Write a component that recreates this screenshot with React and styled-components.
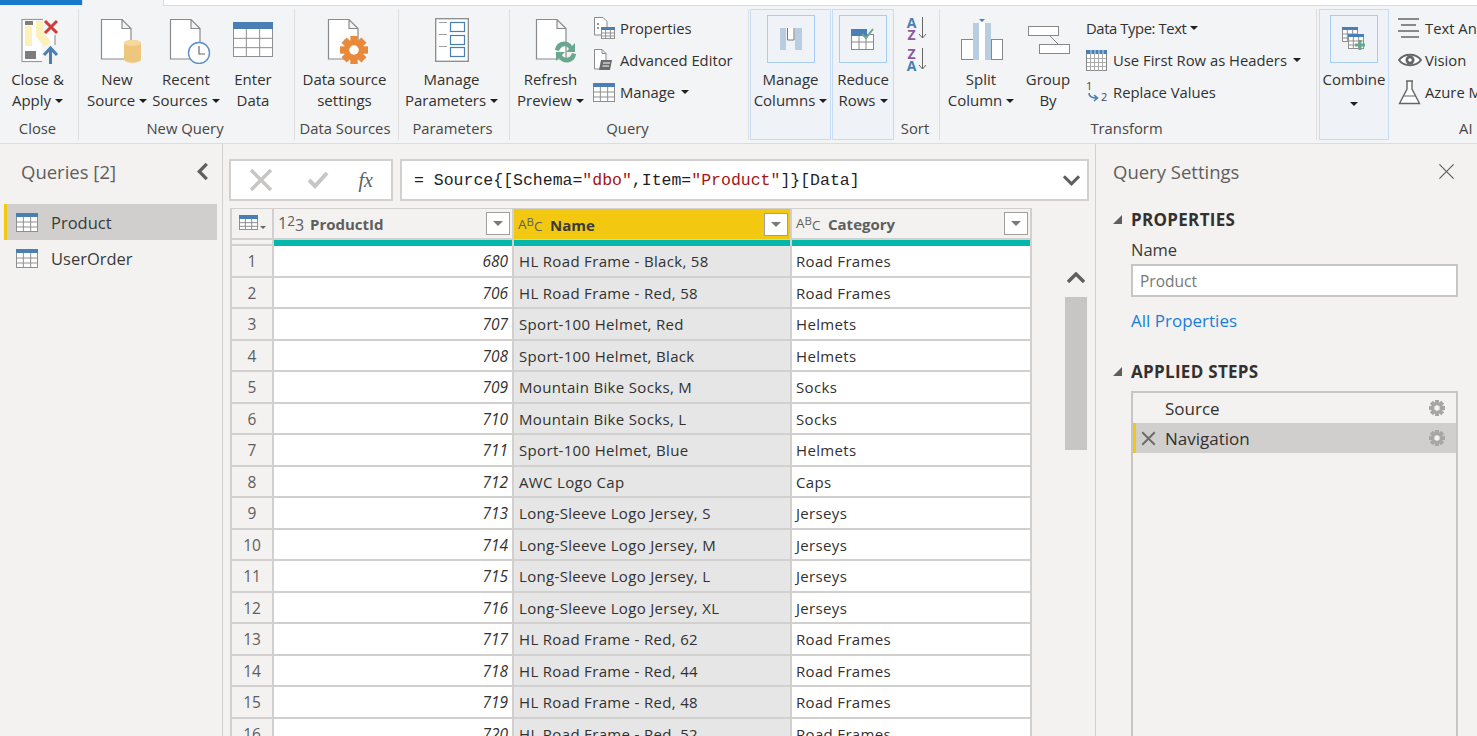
import styled, { createGlobalStyle } from "styled-components";

const GlobalStyle = createGlobalStyle`
  html, body {
    margin: 0;
    padding: 0;
    height: 100%;
    overflow: hidden;
    background: #f3f2f1;
  }
  * { box-sizing: border-box; }
`;

const FONT = `"Open Sans", "Noto Sans", sans-serif`;
const LINE = "#d2d0ce";

const ROWS = [
  [680, "HL Road Frame - Black, 58", "Road Frames"],
  [706, "HL Road Frame - Red, 58", "Road Frames"],
  [707, "Sport-100 Helmet, Red", "Helmets"],
  [708, "Sport-100 Helmet, Black", "Helmets"],
  [709, "Mountain Bike Socks, M", "Socks"],
  [710, "Mountain Bike Socks, L", "Socks"],
  [711, "Sport-100 Helmet, Blue", "Helmets"],
  [712, "AWC Logo Cap", "Caps"],
  [713, "Long-Sleeve Logo Jersey, S", "Jerseys"],
  [714, "Long-Sleeve Logo Jersey, M", "Jerseys"],
  [715, "Long-Sleeve Logo Jersey, L", "Jerseys"],
  [716, "Long-Sleeve Logo Jersey, XL", "Jerseys"],
  [717, "HL Road Frame - Red, 62", "Road Frames"],
  [718, "HL Road Frame - Red, 44", "Road Frames"],
  [719, "HL Road Frame - Red, 48", "Road Frames"],
  [720, "HL Road Frame - Red, 52", "Road Frames"],
];

const Doc = ({ x = 1, w = 30, h = 41 }) => (
  <path
    d={`M${x + 0.5} 1.5H${x + w - 9}L${x + w} 10.5V${h}H${x + 0.5}Z M${x + w - 9} 1.5V10.5H${x + w}`}
    fill="#fff"
    stroke="#8a8a8a"
    strokeWidth="1.2"
  />
);

const GridTable = ({ x = 0, y = 0, w = 40, h = 35, cols = 3, rows = 3, head = 7, stroke = "#8f8f8f" }) => {
  const cells = [];
  const bodyH = h - head;
  for (let i = 1; i < cols; i++) {
    const cx = x + (w * i) / cols;
    cells.push(<path key={`c${i}`} d={`M${cx} ${y + head}V${y + h}`} stroke={stroke} strokeWidth="1" />);
  }
  for (let i = 1; i < rows; i++) {
    const cy = y + head + (bodyH * i) / rows;
    cells.push(<path key={`r${i}`} d={`M${x} ${cy}H${x + w}`} stroke={stroke} strokeWidth="1" />);
  }
  return (
    <g>
      <rect x={x + 0.5} y={y + 0.5} width={w - 1} height={h - 1} fill="#fff" stroke={stroke} />
      {cells}
      <rect x={x} y={y} width={w} height={head} fill="#4a7fb5" />
    </g>
  );
};

const Gear = ({ cx, cy, r, fill, hole }) => (
  <g fill={fill}>
    {[0, 45, 90, 135].map((a) => (
      <rect
        key={a}
        x={cx - r * 0.26}
        y={cy - r}
        width={r * 0.52}
        height={r * 2}
        transform={`rotate(${a} ${cx} ${cy})`}
      />
    ))}
    <circle cx={cx} cy={cy} r={r * 0.72} />
    <circle cx={cx} cy={cy} r={r * 0.34} fill={hole} />
  </g>
);

const CloseApplyIcon = () => (
  <svg width="38" height="46" viewBox="0 0 38 46">
    <rect x="1" y="1.5" width="33" height="42" fill="#fff" stroke="#9a9a9a" strokeWidth="1.2" />
    <path d="M4 8H11V28H4Z M15 3H22V14L30 24L24 30L15 18Z" fill="#fdf0b8" />
    <rect x="4" y="3" width="8" height="4" fill="#7d7d7d" />
    <rect x="4" y="33" width="11" height="8" fill="#7d7d7d" />
    <rect x="22" y="0" width="16" height="17" fill="#f3f4f6" />
    <path d="M24 3L36 15M36 3L24 15" stroke="#cf3a3a" strokeWidth="3" />
    <rect x="21" y="27" width="17" height="19" fill="#f3f4f6" />
    <path d="M29.5 46V31M23 37L29.5 30L36 37" fill="none" stroke="#4a7fb5" strokeWidth="3" />
  </svg>
);

const NewSourceIcon = () => (
  <svg width="42" height="46" viewBox="0 0 42 46">
    <Doc />
    <path d="M24 25C24 21 41 21 41 25V41C41 46 24 46 24 41Z" fill="#eec67e" />
    <ellipse cx="32.5" cy="25" rx="8.5" ry="3" fill="#f4d99f" />
  </svg>
);

const RecentIcon = () => (
  <svg width="42" height="46" viewBox="0 0 42 46">
    <Doc />
    <circle cx="30" cy="35" r="10.5" fill="#fff" stroke="#5b8fc5" strokeWidth="1.4" />
    <path d="M30 28V36H36" fill="none" stroke="#6a6a6a" strokeWidth="1.2" />
  </svg>
);

const EnterDataIcon = () => (
  <svg width="40" height="36" viewBox="0 0 40 36">
    <GridTable h={35} w={40} />
  </svg>
);

const SourceSettingsIcon = () => (
  <svg width="42" height="46" viewBox="0 0 42 46">
    <Doc />
    <Gear cx={27} cy={32} r={14} fill="#e8893b" hole="#fff" />
  </svg>
);

const ParamsIcon = () => (
  <svg width="34" height="44" viewBox="0 0 34 44">
    <rect x="0.7" y="0.7" width="32.6" height="42.6" fill="#fff" stroke="#8a8a8a" strokeWidth="1.3" />
    <path d="M4 4.5H12M4 16.5H12M4 28.5H12" stroke="#a0a0a0" />
    {[4, 17, 29].map((y) => (
      <rect key={y} x="15.5" y={y + 0.5} width="14" height="9" fill="#fff" stroke="#4a7fb5" strokeWidth="1.2" />
    ))}
  </svg>
);

const RefreshIcon = () => (
  <svg width="42" height="46" viewBox="0 0 42 46">
    <Doc />
    <path d="M20 32C21 22 34 21 37 28L40 25V34H31L34 31C32 27 26 27 24 33Z" fill="#6aa78f" />
    <path d="M41 36C40 46 27 47 24 40L21 43V34H30L27 37C29 41 35 41 37 35Z" fill="#6aa78f" />
  </svg>
);

const PropertiesIcon = () => (
  <svg width="22" height="24" viewBox="0 0 22 24">
    <path d="M1.5 1.5H10L14 5.5V19H1.5Z" fill="#fff" stroke="#8a8a8a" />
    <path d="M4 8H6M4 12H6" stroke="#777" strokeWidth="1.5" />
    <GridTable x={8} y={11} w={14} h={12} head={3} />
  </svg>
);

const AdvancedIcon = () => (
  <svg width="20" height="24" viewBox="0 0 20 24">
    <path d="M1.5 1.5H9L13 5.5V21H1.5Z" fill="#fff" stroke="#8a8a8a" />
    <path d="M9 1.5V5.5H13" fill="none" stroke="#8a8a8a" />
    <path d="M8 12H19L17 22H6Z" fill="#6b6b6b" />
    <path d="M10 15H17M9.5 18H16" stroke="#fff" />
  </svg>
);

const SmallTableIcon = () => (
  <svg width="22" height="19" viewBox="0 0 22 19">
    <GridTable w={22} h={19} head={4} />
  </svg>
);

const ManageColumnsIcon = () => (
  <svg width="22" height="22" viewBox="0 0 22 22">
    <rect x="0" y="0" width="6" height="22" fill="#b9cde0" />
    <rect x="15" y="0" width="7" height="22" fill="#b9cde0" />
    <path d="M7.5 0V12H14V0" fill="#fff" stroke="#777" />
  </svg>
);

const ReduceRowsIcon = () => (
  <svg width="24" height="22" viewBox="0 0 24 22">
    <rect x="0.5" y="6.5" width="22" height="15" fill="#fff" stroke="#888" />
    <path d="M8 8V22M15 8V22M1 14H22" stroke="#888" />
    <rect x="0" y="1" width="16" height="7" fill="#4a7fb5" />
    <path d="M11 6L15 10L22 1" fill="none" stroke="#6aa78f" strokeWidth="2" />
  </svg>
);

const SortArrow = () => (
  <svg width="9" height="22" viewBox="0 0 9 22">
    <path d="M4.5 0V21M1 17L4.5 21L8 17" fill="none" stroke="#666" />
  </svg>
);

const SortIcon = ({ first, second }) => (
  <SortRow>
    <SortLetters>
      <SortLetter $letter={first}>{first}</SortLetter>
      <SortLetter $letter={second}>{second}</SortLetter>
    </SortLetters>
    <SortArrow />
  </SortRow>
);

const SplitIcon = () => (
  <svg width="44" height="42" viewBox="0 0 44 42">
    <path d="M18 1L21 4L24 1Z" fill="#4a7fb5" />
    <rect x="0.5" y="21.5" width="12" height="20" fill="#fff" stroke="#888" />
    <rect x="12" y="5" width="6" height="37" fill="#b9cde0" />
    <rect x="18" y="5" width="6" height="37" fill="#fff" />
    <rect x="24" y="5" width="6" height="37" fill="#b9cde0" />
    <rect x="30.5" y="21.5" width="11" height="20" fill="#fff" stroke="#888" />
  </svg>
);

const GroupByIcon = () => (
  <svg width="42" height="28" viewBox="0 0 42 28">
    <rect x="0.5" y="0.5" width="30" height="9" fill="#fff" stroke="#888" />
    <rect x="11.5" y="18.5" width="30" height="9" fill="#fff" stroke="#888" />
    <path d="M22 10L30 18" stroke="#888" />
  </svg>
);

const DenseTableIcon = () => (
  <svg width="21" height="21" viewBox="0 0 21 21">
    <rect x="0.5" y="0.5" width="20" height="20" fill="#fff" stroke="#888" />
    <path d="M4.5 1V21M8.5 1V21M12.5 1V21M16.5 1V21M1 8.5H20M1 12.5H20M1 16.5H20" stroke="#aaa" />
    <rect x="0" y="0" width="21" height="4" fill="#4a7fb5" />
    <path d="M5 0V4M9 0V4M13 0V4M17 0V4" stroke="#fff" strokeWidth="0.7" />
  </svg>
);

const ReplaceIcon = () => (
  <svg width="24" height="24" viewBox="0 0 24 24">
    <text x="0" y="10" fontFamily={FONT} fontSize="11" fill="#444">1</text>
    <text x="15" y="21" fontFamily={FONT} fontSize="11" fill="#444">2</text>
    <path d="M3 13C3 17 7 18 11 18M8 15L11.5 18L8 21" fill="none" stroke="#4a7fb5" strokeWidth="1.6" />
  </svg>
);

const CombineIcon = () => (
  <svg width="24" height="24" viewBox="0 0 24 24">
    <GridTable w={16} h={15} head={3} />
    <rect x="6" y="7" width="17" height="16" fill="#eff2f6" />
    <GridTable x={6} y={7} w={16} h={15} head={3} />
    <path d="M18 13V23M13 18H23" stroke="#6aa78f" strokeWidth="3" />
  </svg>
);

const LinesIcon = () => (
  <svg width="22" height="20" viewBox="0 0 22 20">
    <path d="M0 1H21M3 7H18M0 13H21M3 19H21" stroke="#666" strokeWidth="1.3" />
  </svg>
);

const EyeIcon = () => (
  <svg width="24" height="14" viewBox="0 0 24 14">
    <path d="M1 7C6 0 18 0 23 7C18 14 6 14 1 7Z" fill="#fff" stroke="#666" strokeWidth="2" />
    <circle cx="12" cy="7" r="4.5" fill="#666" />
    <circle cx="12" cy="7" r="1.8" fill="#fff" />
  </svg>
);

const FlaskIcon = () => (
  <svg width="23" height="25" viewBox="0 0 23 25">
    <path d="M8 1H15M9 1V9L1.5 23.5H21.5L14 9V1" fill="#fff" stroke="#666" strokeWidth="1.4" />
    <path d="M5 16H18" stroke="#666" />
  </svg>
);

const XIcon = ({ size = 24, color = "#c8c6c4", weight = 3 }) => (
  <svg width={size} height={size} viewBox="0 0 24 24">
    <path d="M2 2L22 22M22 2L2 22" stroke={color} strokeWidth={weight} fill="none" />
  </svg>
);

const CheckIcon = () => (
  <svg width="26" height="18" viewBox="-4 0 26 18">
    <path d="M2 9L8 15L20 2" stroke="#c8c6c4" strokeWidth="4" fill="none" />
  </svg>
);

const Chevron = ({ dir = "down", w = 18, h = 11, color = "#605e5c", weight = 3.2 }) => {
  const d = dir === "down" ? "M1 1L9 9L17 1" : dir === "up" ? "M1 10L9 2L17 10" : "M10 1L2 9L10 17";
  const vb = dir === "left" ? "0 0 12 18" : "0 0 18 11";
  return (
    <svg width={w} height={h} viewBox={vb}>
      <path d={d} stroke={color} strokeWidth={weight} fill="none" />
    </svg>
  );
};

const Large = ({ width, icon, lines, caret, boxed, shift, drop }) => (
  <LargeButton $width={width}>
    <IconSlot $boxed={boxed} $shift={shift} $drop={drop}>
      {icon}
    </IconSlot>
    <LabelLine>{lines[0]}</LabelLine>
    <LabelLine>
      {lines[1]}
      {caret && <Caret $solo={!lines[1]} />}
    </LabelLine>
  </LargeButton>
);

const Small = ({ icon, label, caret, gap, tight }) => (
  <SmallButton $tight={tight}>
    {icon && <SmallIcon>{icon}</SmallIcon>}
    <span>{label}</span>
    {caret && <Caret $gap={gap} />}
  </SmallButton>
);

const TypeIcon = ({ kind }) =>
  kind === "num" ? (
    <TypeGlyph>
      1<Raised>2</Raised>
      <Lowered>3</Lowered>
    </TypeGlyph>
  ) : (
    <TypeGlyph $small>
      A<Raised>B</Raised>
      <Lowered>C</Lowered>
    </TypeGlyph>
  );

const HeaderCell = ({ kind, label, active }) => (
  <HeadCell $active={active}>
    <TypeIcon kind={kind} />
    <HeadLabel $active={active}>{label}</HeadLabel>
    <FilterButton />
  </HeadCell>
);

const App = () => {
  return (
    <Page>
      <GlobalStyle />
      <TabStrip>
        <BlueTab />
        <ActiveTab />
        <StripRest />
      </TabStrip>
      <Ribbon>
        <Group $width={79}>
          <GroupBody>
            <Large width={75} shift={2} icon={<CloseApplyIcon />} lines={["Close &", "Apply"]} caret />
          </GroupBody>
          <Caption>Close</Caption>
        </Group>
        <Group $width={216}>
          <GroupBody $pad={5}>
            <Large width={66} shift={4} icon={<NewSourceIcon />} lines={["New", "Source"]} caret />
            <Large width={72} shift={4} icon={<RecentIcon />} lines={["Recent", "Sources"]} caret />
            <Large width={62} drop={4} icon={<EnterDataIcon />} lines={["Enter", "Data"]} />
          </GroupBody>
          <Caption>New Query</Caption>
        </Group>
        <Group $width={104}>
          <GroupBody>
            <Large width={99} shift={3} icon={<SourceSettingsIcon />} lines={["Data source", "settings"]} />
          </GroupBody>
          <Caption>Data Sources</Caption>
        </Group>
        <Group $width={111}>
          <GroupBody>
            <Large width={105} icon={<ParamsIcon />} lines={["Manage", "Parameters"]} caret />
          </GroupBody>
          <Caption>Parameters</Caption>
        </Group>
        <Group $width={239}>
          <GroupBody $pad={3}>
            <Large width={75} shift={5} icon={<RefreshIcon />} lines={["Refresh", "Preview"]} caret />
            <SmallStack $left={5}>
              <Small icon={<PropertiesIcon />} label="Properties" />
              <Small icon={<AdvancedIcon />} label="Advanced Editor" />
              <Small icon={<SmallTableIcon />} label="Manage" caret gap={6} />
            </SmallStack>
          </GroupBody>
          <Caption>Query</Caption>
        </Group>
        <Collapsed $width={81} $left={1}>
          <Large width={79} boxed icon={<ManageColumnsIcon />} lines={["Manage", "Columns"]} caret />
        </Collapsed>
        <Collapsed $width={62} $left={1}>
          <Large width={60} boxed icon={<ReduceRowsIcon />} lines={["Reduce", "Rows"]} caret />
        </Collapsed>
        <Group $width={46}>
          <GroupBody>
            <SortStack>
              <SortIcon first="A" second="Z" />
              <SortIcon first="Z" second="A" />
            </SortStack>
          </GroupBody>
          <Caption>Sort</Caption>
        </Group>
        <Group $width={377}>
          <GroupBody $pad={4}>
            <Large width={74} shift={2} icon={<SplitIcon />} lines={["Split", "Column"]} caret />
            <Large width={60} shift={1} drop={8} icon={<GroupByIcon />} lines={["Group", "By"]} />
            <SmallStack $left={8}>
              <Small label="Data Type: Text" caret gap={4} tight />
              <Small icon={<DenseTableIcon />} label="Use First Row as Headers" caret gap={6} />
              <Small icon={<ReplaceIcon />} label="Replace Values" />
            </SmallStack>
          </GroupBody>
          <Caption>Transform</Caption>
        </Group>
        <Collapsed $width={70} $left={2}>
          <Large width={68} boxed icon={<CombineIcon />} lines={["Combine", ""]} caret />
        </Collapsed>
        <AiGroup>
          <GroupBody>
            <SmallStack $left={9}>
              <Small icon={<LinesIcon />} label="Text Analytics" />
              <Small icon={<EyeIcon />} label="Vision" />
              <Small icon={<FlaskIcon />} label="Azure Machine Learning" />
            </SmallStack>
          </GroupBody>
          <Caption>AI Insights</Caption>
        </AiGroup>
      </Ribbon>

      <Workspace>
        <QueriesPanel>
          <PanelHead>
            <PanelTitle>Queries [2]</PanelTitle>
            <Chevron dir="left" w={12} h={17} weight={3.5} />
          </PanelHead>
          <QueryList>
            <QueryItem $selected>
              <SmallTableIcon />
              Product
            </QueryItem>
            <QueryItem>
              <SmallTableIcon />
              UserOrder
            </QueryItem>
          </QueryList>
        </QueriesPanel>

        <Center>
          <FormulaRow>
            <FormulaTools>
              <XIcon size={24} weight={3.5} />
              <CheckIcon />
              <FxLabel>fx</FxLabel>
            </FormulaTools>
            <FormulaBox>
              <FormulaText>
                = Source{"{"}[Schema=<Str>"dbo"</Str>,Item=<Str>"Product"</Str>]{"}"}[Data]
              </FormulaText>
              <Chevron dir="down" w={17} h={11} />
            </FormulaBox>
          </FormulaRow>
          <TableArea>
            <Table>
              <CornerCell>
                <SmallTableMenu>
                  <svg width="28" height="17" viewBox="0 0 28 17">
                    <GridTable w={19} h={15} head={4} />
                    <path d="M21 11H27L24 14Z" fill="#666" />
                  </svg>
                </SmallTableMenu>
              </CornerCell>
              <HeaderCell kind="num" label="ProductId" />
              <HeaderCell kind="abc" label="Name" active />
              <HeaderCell kind="abc" label="Category" />
              <QualityGap />
              <QualityBar />
              <QualityBar />
              <QualityBar />
              {ROWS.map(([id, name, cat], i) => (
                <Row key={id}>
                  <NumCell>{i + 1}</NumCell>
                  <IdCell>{id}</IdCell>
                  <TextCell $selected>{name}</TextCell>
                  <TextCell>{cat}</TextCell>
                </Row>
              ))}
            </Table>
            <Scroller>
              <Chevron dir="up" w={18} h={11} weight={3.4} />
              <ScrollThumb />
            </Scroller>
          </TableArea>
        </Center>

        <SettingsPanel>
          <SettingsHead>
            <PanelTitle>Query Settings</PanelTitle>
            <XIcon size={17} color="#605e5c" weight={1.7} />
          </SettingsHead>
          <SectionHead $top={20}>
            <Wedge />
            PROPERTIES
          </SectionHead>
          <SectionBody>
            <FieldLabel>Name</FieldLabel>
            <NameInput>Product</NameInput>
            <PropsLink>All Properties</PropsLink>
          </SectionBody>
          <SectionHead $top={24}>
            <Wedge />
            APPLIED STEPS
          </SectionHead>
          <StepsBox>
            <Step>
              <StepX />
              <StepName>Source</StepName>
              <StepGear />
            </Step>
            <Step $selected>
              <StepX>
                <XIcon size={15} color="#6b6b6b" weight={3} />
              </StepX>
              <StepName>Navigation</StepName>
              <StepGear />
            </Step>
          </StepsBox>
        </SettingsPanel>
      </Workspace>
    </Page>
  );
};

const StepGear = () => (
  <GearWrap>
    <svg width="16" height="16" viewBox="0 0 16 16">
      <Gear cx={8} cy={8} r={8} fill="#a8a6a4" hole="#f3f2f1" />
    </svg>
  </GearWrap>
);

const Page = styled.div`
  width: 1477px;
  height: 736px;
  overflow: hidden;
  display: flex;
  flex-direction: column;
  background: #f3f2f1;
  font-family: ${FONT};
  color: #252423;
`;
const TabStrip = styled.div`
  display: flex;
  height: 6px;
  flex-shrink: 0;
`;
const BlueTab = styled.div`
  width: 82px;
  height: 5px;
  background: #1979ca;
`;
const ActiveTab = styled.div`
  width: 82px;
  background: #f3f4f6;
  border-left: 1px solid #dcdcdc;
  border-right: 1px solid #dcdcdc;
`;
const StripRest = styled.div`
  flex: 1;
  background: #fff;
  border-bottom: 1px solid #dcdcdc;
`;
const Ribbon = styled.div`
  height: 138px;
  flex-shrink: 0;
  display: flex;
  padding: 3px 0;
  background: #f3f4f6;
  border-bottom: 1px solid #dcdcdc;
  overflow: hidden;
`;
const Group = styled.div`
  width: ${(p) => p.$width}px;
  flex-shrink: 0;
  display: flex;
  flex-direction: column;
  border-right: 1px solid #dedede;
`;
const AiGroup = styled.div`
  width: 214px;
  flex-shrink: 0;
  display: flex;
  flex-direction: column;
`;
const GroupBody = styled.div`
  flex: 1;
  display: flex;
  padding-left: ${(p) => p.$pad || 0}px;
  white-space: nowrap;
`;
const Caption = styled.div`
  height: 22px;
  padding-right: 3px;
  font-size: 14.8px;
  line-height: 21px;
  color: #484644;
  text-align: center;
  white-space: nowrap;
`;
const Collapsed = styled.div`
  width: ${(p) => p.$width}px;
  margin-left: ${(p) => p.$left}px;
  flex-shrink: 0;
  background: #eff2f6;
  border: 1px solid #c5dcf4;
  display: flex;
  justify-content: center;
`;
const LargeButton = styled.div`
  width: ${(p) => p.$width}px;
  flex-shrink: 0;
  display: flex;
  flex-direction: column;
  align-items: center;
  font-size: 15px;
`;
const IconSlot = styled.div`
  height: ${(p) => (p.$boxed ? 48 : 51)}px;
  width: ${(p) => (p.$boxed ? "48px" : "auto")};
  margin-top: ${(p) => (p.$boxed ? 5 : 9)}px;
  margin-bottom: ${(p) => (p.$boxed ? 6 : 0)}px;
  padding-left: ${(p) => (p.$shift || 0) * 2}px;
  padding-top: ${(p) => p.$drop || 0}px;
  display: flex;
  align-items: ${(p) => (p.$boxed ? "center" : "flex-start")};
  justify-content: center;
  border: ${(p) => (p.$boxed ? "1px solid #a6cdf5" : "none")};
`;
const LabelLine = styled.div`
  height: 21px;
  line-height: 21px;
  white-space: nowrap;
  color: #323130;
`;
const Caret = styled.span`
  display: inline-block;
  width: 0;
  height: 0;
  margin-left: ${(p) => (p.$solo ? 0 : p.$gap || 4)}px;
  vertical-align: ${(p) => (p.$solo ? "0" : "3px")};
  border-left: 4px solid transparent;
  border-right: 4px solid transparent;
  border-top: 4px solid #1f1f1f;
`;
const SmallStack = styled.div`
  display: flex;
  flex-direction: column;
  padding-top: 3px;
  margin-left: ${(p) => p.$left || 0}px;
`;
const SmallButton = styled.div`
  height: 32px;
  display: flex;
  align-items: center;
  font-size: 14.8px;
  letter-spacing: ${(p) => (p.$tight ? "-0.4px" : "0")};
  color: #323130;
  white-space: nowrap;
`;
const SmallIcon = styled.span`
  width: 27px;
  display: flex;
  align-items: center;
  justify-content: flex-start;
`;
const SortStack = styled.div`
  display: flex;
  flex-direction: column;
  gap: 7px;
  padding: 8px 0 0 12px;
`;
const SortRow = styled.div`
  display: flex;
  align-items: flex-start;
  gap: 1px;
`;
const SortLetters = styled.div`
  display: flex;
  flex-direction: column;
  width: 11px;
  align-items: center;
`;
const SortLetter = styled.span`
  font-size: 14px;
  font-weight: 700;
  line-height: 12px;
  color: ${(p) => (p.$letter === "A" ? "#4a7fb5" : "#8a5aa8")};
`;
const Workspace = styled.div`
  flex: 1;
  min-height: 0;
  display: flex;
`;
const QueriesPanel = styled.div`
  width: 223px;
  flex-shrink: 0;
  border-right: 1px solid ${LINE};
  padding: 12px 5px 0 4px;
`;
const PanelHead = styled.div`
  display: flex;
  align-items: center;
  justify-content: space-between;
  height: 30px;
  padding: 0 8px 0 17px;
`;
const PanelTitle = styled.div`
  font-size: 18.5px;
  color: #605e5c;
`;
const QueryList = styled.div`
  margin-top: 18px;
`;
const QueryItem = styled.div`
  height: 36px;
  display: flex;
  align-items: center;
  gap: 13px;
  padding-left: ${(p) => (p.$selected ? 9 : 12)}px;
  padding-top: 1px;
  font-size: 16.5px;
  color: #3b3a39;
  background: ${(p) => (p.$selected ? "#d0cfcd" : "transparent")};
  border-left: ${(p) => (p.$selected ? "3px solid #f2c811" : "none")};
`;
const Center = styled.div`
  width: 872px;
  flex-shrink: 0;
  padding: 15px 6px 0 6px;
  display: flex;
  flex-direction: column;
`;
const FormulaRow = styled.div`
  display: flex;
  gap: 7px;
  height: 42px;
  flex-shrink: 0;
`;
const FormulaTools = styled.div`
  width: 164px;
  background: #fff;
  border: 2px solid ${LINE};
  display: flex;
  align-items: center;
  justify-content: space-between;
  padding: 0 18px;
`;
const FxLabel = styled.span`
  font-family: "Liberation Serif", serif;
  font-style: italic;
  font-size: 20px;
  color: #605e5c;
`;
const FormulaBox = styled.div`
  flex: 1;
  background: #fff;
  border: 2px solid ${LINE};
  display: flex;
  align-items: center;
  justify-content: space-between;
  padding: 0 7px 0 12px;
`;
const FormulaText = styled.span`
  font-family: "Liberation Mono", monospace;
  font-size: 16.5px;
  color: #1f1f1f;
  white-space: pre;
`;
const Str = styled.span`
  color: #a31515;
`;
const TableArea = styled.div`
  display: flex;
  margin-top: 7px;
  padding-left: 1px;
  flex: 1;
  min-height: 0;
`;
const Table = styled.div`
  width: 802px;
  flex-shrink: 0;
  display: grid;
  grid-template-columns: 44px 240px 278px 240px;
  grid-auto-rows: min-content;
  align-content: start;
  border-top: 1px solid ${LINE};
`;
const CornerCell = styled.div`
  height: 31px;
  background: #f3f2f1;
  border-left: 2px solid ${LINE};
  border-right: 2px solid ${LINE};
  border-bottom: 2px solid ${LINE};
  display: flex;
  align-items: center;
  padding-left: 7px;
`;
const SmallTableMenu = styled.div`
  height: 17px;
`;
const HeadCell = styled.div`
  height: 31px;
  display: flex;
  align-items: center;
  padding: 0 2px 0 4px;
  background: ${(p) => (p.$active ? "#f2c811" : "#f3f2f1")};
  border-right: 2px solid ${LINE};
  border-bottom: ${(p) => (p.$active ? 1 : 2)}px solid ${LINE};
`;
const HeadLabel = styled.div`
  flex: 1;
  font-size: 15px;
  font-weight: 700;
  color: ${(p) => (p.$active ? "#3b3a39" : "#605e5c")};
  margin-left: 8px;
  padding-top: 1px;
`;
const TypeGlyph = styled.span`
  width: 24px;
  display: inline-flex;
  align-items: baseline;
  font-size: ${(p) => (p.$small ? 13.5 : 16)}px;
  color: #605e5c;
  line-height: 20px;
`;
const Raised = styled.span`
  font-size: 0.85em;
  position: relative;
  top: -3px;
`;
const Lowered = styled.span`
  font-size: 1em;
  position: relative;
  top: 2px;
`;
const FilterButton = styled.div`
  width: 24px;
  height: 23px;
  background: #fff;
  border: 1px solid #a19f9d;
  display: flex;
  align-items: center;
  justify-content: center;
  &::after {
    content: "";
    border-left: 5px solid transparent;
    border-right: 5px solid transparent;
    border-top: 5px solid #7a7a7a;
  }
`;
const QualityGap = styled.div`
  height: 6px;
  background: #f3f2f1;
  border-left: 2px solid ${LINE};
  border-right: 2px solid ${LINE};
  border-bottom: 2px solid ${LINE};
`;
const QualityBar = styled.div`
  height: 6px;
  background: #01b8aa;
  border-right: 2px solid ${LINE};
`;
const Row = styled.div`
  display: contents;
`;
const NumCell = styled.div`
  height: 31.5px;
  font-size: 15.5px;
  color: #605e5c;
  background: #f3f2f1;
  border-left: 2px solid ${LINE};
  border-right: 2px solid ${LINE};
  border-bottom: 2px solid ${LINE};
  display: flex;
  align-items: center;
  justify-content: center;
  padding-top: 1px;
`;
const IdCell = styled.div`
  height: 31.5px;
  font-size: 15.5px;
  font-style: italic;
  background: #fff;
  color: #323130;
  border-right: 2px solid ${LINE};
  border-bottom: 2px solid ${LINE};
  display: flex;
  align-items: center;
  justify-content: flex-end;
  padding: 1px 4px 0 0;
`;
const TextCell = styled.div`
  height: 31.5px;
  font-size: 15px;
  letter-spacing: 0.33px;
  color: #323130;
  background: ${(p) => (p.$selected ? "#e6e6e6" : "#fff")};
  border-right: 2px solid ${LINE};
  border-bottom: 2px solid ${LINE};
  display: flex;
  align-items: center;
  padding: 1px 0 0 ${(p) => (p.$selected ? 5 : 4)}px;
  white-space: nowrap;
`;
const Scroller = styled.div`
  width: 22px;
  margin-left: 33px;
  padding-top: 64px;
  display: flex;
  flex-direction: column;
  align-items: center;
`;
const ScrollThumb = styled.div`
  width: 22px;
  height: 153px;
  margin-top: 14px;
  background: #c8c6c4;
`;
const SettingsPanel = styled.div`
  flex: 1;
  min-width: 0;
  border-left: 1px solid ${LINE};
  padding: 12px 19px 0 17px;
  display: flex;
  flex-direction: column;
`;
const SettingsHead = styled.div`
  display: flex;
  align-items: center;
  justify-content: space-between;
  height: 30px;
  padding-right: 3px;
`;
const SectionHead = styled.div`
  display: flex;
  align-items: center;
  gap: 9px;
  margin-top: ${(p) => p.$top}px;
  height: 26px;
  font-size: 17px;
  font-weight: 700;
  letter-spacing: 0.3px;
  color: #323130;
`;
const Wedge = styled.span`
  width: 0;
  height: 0;
  border-bottom: 9px solid #605e5c;
  border-left: 9px solid transparent;
`;
const SectionBody = styled.div`
  padding-left: 18px;
  display: flex;
  flex-direction: column;
`;
const FieldLabel = styled.div`
  font-size: 16.5px;
  height: 25px;
  line-height: 25px;
  margin-top: 5px;
  color: #3b3a39;
`;
const NameInput = styled.div`
  height: 33px;
  margin-top: 2px;
  padding-left: 7px;
  display: flex;
  align-items: center;
  background: #fff;
  border: 2px solid #c8c6c4;
  font-size: 15.5px;
  color: #797775;
`;
const PropsLink = styled.div`
  margin-top: 11px;
  height: 26px;
  line-height: 26px;
  font-size: 17px;
  color: #1a7fd4;
`;
const StepsBox = styled.div`
  margin: 7px 0 0 18px;
  flex: 1;
  border: 2px solid #c8c6c4;
  border-bottom: none;
`;
const Step = styled.div`
  height: 30px;
  display: flex;
  align-items: center;
  background: ${(p) => (p.$selected ? "#d0cfcd" : "transparent")};
  border-left: 3px solid ${(p) => (p.$selected ? "#f2c811" : "transparent")};
`;
const StepX = styled.span`
  width: 29px;
  display: flex;
  justify-content: center;
  padding-right: 4px;
`;
const StepName = styled.span`
  flex: 1;
  font-size: 17px;
  color: #323130;
`;
const GearWrap = styled.span`
  display: flex;
  margin-right: 11px;
`;

export default App;
